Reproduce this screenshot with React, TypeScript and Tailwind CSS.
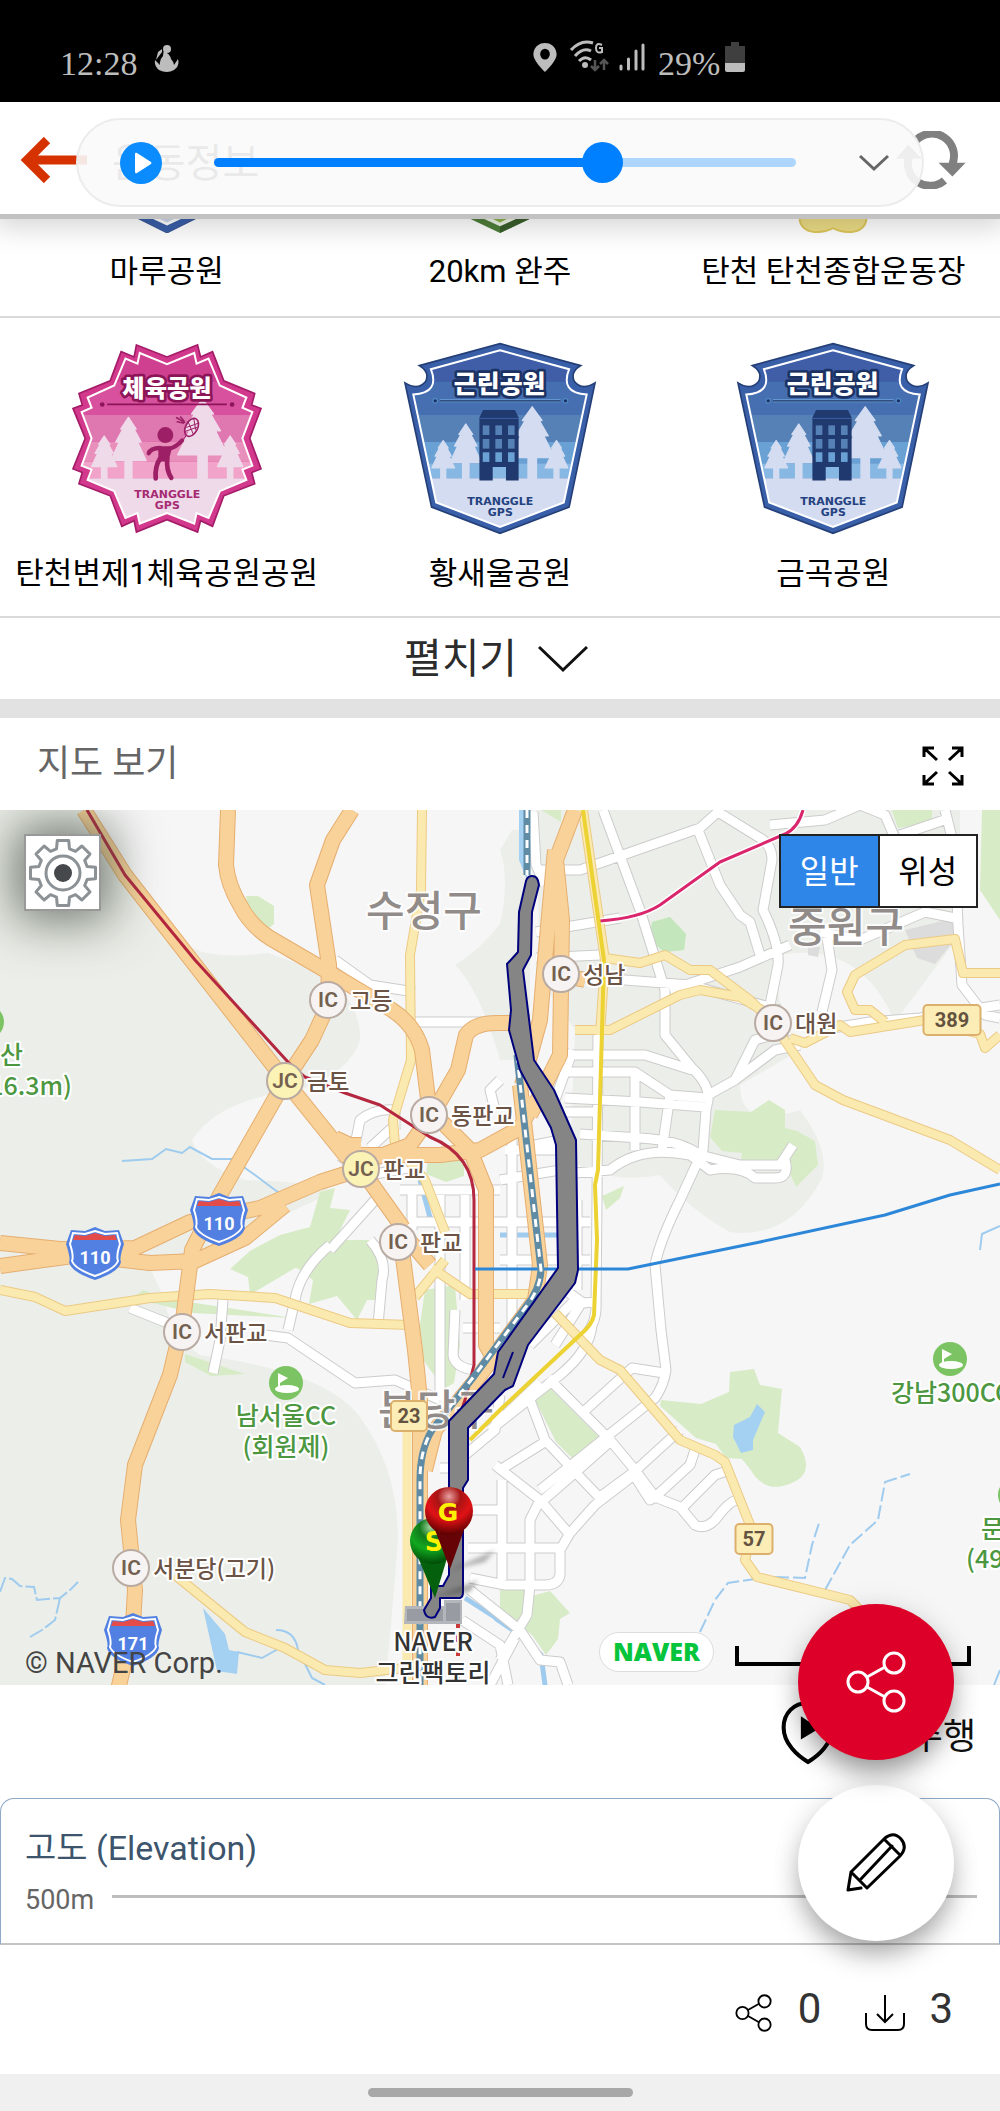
import React from "react";

const SANS = "font-['Roboto','Noto_Sans_CJK_KR',sans-serif]";

/* ---------- status bar ---------- */

function StatusBar() {
  return (
    <div className="flex h-[102px] items-end bg-black px-[60px] pb-[18px] font-['Liberation_Serif',serif] text-[34px] leading-10 text-[#bdbdbd]">
      <span className="w-[76px]">12:28</span>
      <svg className="mb-3 ml-[18px] h-[28px] w-[25px]" viewBox="0 0 25 28" fill="#bdbdbd" aria-hidden="true">
        <circle cx="13" cy="5" r="4" />
        <path d="M10 7q6 3 7 8q3 3 3 6l4-6q2 7-4 11q-7 4-15 0q-5-4-4-10l5 5q-1-5 3-9q0-3 1-5zM4 8l4-3v3l-6 8z" />
      </svg>
      <div className="ml-[354px] flex items-end">
        <svg className="mb-3 h-[29px] w-[24px]" viewBox="0 0 24 30" fill="#bdbdbd" aria-hidden="true">
          <path fillRule="evenodd" d="M12 0C5 0 0 5 0 12c0 7 12 18 12 18s12-11 12-18C24 5 19 0 12 0zm0 6a5 5.500 0 1 1 0 11a5 5.500 0 1 1 0-11z" />
        </svg>
        <svg className="mb-3 ml-3 h-[32px] w-[40px]" viewBox="0 0 40 32" aria-hidden="true">
          <g fill="none" stroke="#bdbdbd" strokeWidth="3">
            <path d="M2 10Q12-1 24 3M6 16Q14 7 22 11M10 21Q16 15 22 20" />
          </g>
          <circle cx="16" cy="25" r="3" fill="#bdbdbd" />
          <path d="M33 5q-6-3-6 3q0 6 6 4v-4h-3" fill="none" stroke="#bdbdbd" strokeWidth="2" />
          <path d="M26 20v10m-4-4l4 4l4-4M35 30V20m-4 4l4-4l4 4" fill="none" stroke="#555" strokeWidth="2.500" />
        </svg>
        <svg className="mb-3 ml-[10px] h-[30px] w-[26px]" viewBox="0 0 26 30" stroke="#bdbdbd" strokeWidth="3" strokeLinecap="round" aria-hidden="true">
          <path d="M2 24v3M9.500 17v10M17 9v18M24 3v24" />
        </svg>
        <span className="ml-[13px] w-[67px]">29%</span>
        <svg className="mb-3 h-[30px] w-[20px]" viewBox="0 0 20 30" aria-hidden="true">
          <path d="M6 0h8v4h6v18H0V4h6z" fill="#3f3f3f" />
          <path d="M0 21h20v7q0 2-2 2H2q-2 0-2-2z" fill="#bdbdbd" />
        </svg>
      </div>
    </div>
  );
}

/* ---------- header with the floating player ---------- */

function Header() {
  return (
    <header className="relative z-10 flex h-[112px] items-center justify-between bg-white pl-[20px] pr-[33px] pt-[4px] shadow-[0_5px_0_#c2c2c2,0_8px_26px_6px_rgba(0,0,0,0.16)]">
      <div className="flex items-center">
        <button type="button" aria-label="뒤로">
          <svg className="h-[46px] w-[70px]" viewBox="0 0 70 46" aria-hidden="true">
            <path d="M27 3L7 23l20 20M7 23h60" fill="none" stroke="#d63200" strokeWidth="9" />
          </svg>
        </button>
        <h1 className="ml-[22px] mt-[8px] text-[40px] leading-[48px] text-[#555]">운동정보</h1>
      </div>
      <button type="button" aria-label="새로고침">
        <svg className="h-[58px] w-[74px]" viewBox="1120 300 220 176" aria-hidden="true">
          <g fill="none" stroke="#808080" strokeWidth="24">
            <path d="M1188 328A67 67 0 0 1 1298 400" />
            <path d="M1274 450A67 67 0 0 1 1166 380" />
          </g>
          <path d="M1256 396h82l-40 42zM1126 384h80l-42-42z" fill="#808080" />
        </svg>
      </button>

      <div className="absolute inset-x-[76px] top-[16px] flex h-[89px] items-center rounded-full border-2 border-[#ececec] bg-[#fafafa]/90 pl-[42px] pr-[32px]">
        <button type="button" aria-label="재생" className="flex size-[42px] shrink-0 items-center justify-center rounded-full bg-[#0a8cff]">
          <svg className="ml-1 h-[22px] w-[18px]" viewBox="0 0 18 22" aria-hidden="true">
            <path d="M1 2v18q0 2 2 1l14-9q1-1 0-2L3 1Q1 0 1 2z" fill="#fff" />
          </svg>
        </button>
        <input
          type="range"
          aria-label="재생 위치"
          min={0}
          max={100}
          defaultValue={68}
          className="ml-[52px] mr-[62px] h-[42px] min-w-0 grow appearance-none bg-transparent [&::-webkit-slider-runnable-track]:h-[9px] [&::-webkit-slider-runnable-track]:rounded-full [&::-webkit-slider-runnable-track]:bg-[linear-gradient(90deg,#0080ff_66%,#aed5fb_66%)] [&::-webkit-slider-thumb]:mt-[-16px] [&::-webkit-slider-thumb]:size-[41px] [&::-webkit-slider-thumb]:appearance-none [&::-webkit-slider-thumb]:rounded-full [&::-webkit-slider-thumb]:bg-[#0080ff]"
        />
        <button type="button" aria-label="플레이어 접기">
          <svg className="h-[18px] w-[32px]" viewBox="0 0 32 18" aria-hidden="true">
            <path d="M2 2l14 13L30 2" fill="none" stroke="#666" strokeWidth="3" />
          </svg>
        </button>
      </div>
    </header>
  );
}

/* ---------- badges ---------- */

function Tree({ x, top, base, w, fill }: { x: number; top: number; base: number; w: number; fill: string }) {
  const h = base - top;
  const d = `M${x} ${top}L${x + w * 0.22} ${top + h * 0.27}H${x + w * 0.16}L${x + w * 0.36} ${top + h * 0.57}H${x + w * 0.26}L${x + w * 0.5} ${base}H${x - w * 0.5}L${x - w * 0.26} ${top + h * 0.57}H${x - w * 0.36}L${x - w * 0.16} ${top + h * 0.27}H${x - w * 0.22}Z`;
  return (
    <g fill={fill}>
      <path d={d} stroke={fill} strokeWidth="4" strokeLinejoin="round" />
      <rect x={x - w * 0.08 - 4} y={base} width={w * 0.16 + 8} height={480 - base} />
    </g>
  );
}

function BlueBadge({ id }: { id: string }) {
  const inner = "M1003 90L1211 147Q1183 218 1264 223L1195 548L1003 622L811 548L742 223Q823 218 795 147Z";
  return (
    <svg className="h-[196px] w-[202px]" viewBox="700 62 606 590" role="img" aria-label="근린공원 배지">
      <clipPath id={id}>
        <path d={inner} />
      </clipPath>
      <path d="M1003 70L1246 136Q1213 156 1227 184Q1250 212 1289 188L1211 562L1003 641L797 562L717 188Q756 212 779 184Q793 156 760 136Z" fill="#3a5fa9" stroke="#243f77" strokeWidth="5" />
      <g clipPath={`url(#${id})`}>
        <path d="M700 60h606v125H700z" fill="#3f5ea7" />
        <path d="M700 185h606v100H700z" fill="#456fb0" />
        <path d="M700 285h606v80H700z" fill="#5581b6" />
        <path d="M700 365h606v65H700z" fill="#69a1d4" />
        <path d="M700 430h606v45H700z" fill="#86b8e3" />
        <path d="M700 475h606v180H700z" fill="#d3dcf0" />
        <Tree x={832} top={362} base={444} w={68} fill="#d3dcf0" />
        <Tree x={900} top={312} base={428} w={94} fill="#d3dcf0" />
        <Tree x={1100} top={260} base={413} w={134} fill="#d3dcf0" />
        <Tree x={1173} top={362} base={444} w={68} fill="#d3dcf0" />
      </g>
      <path d={inner} fill="none" stroke="#fff" strokeWidth="6" />
      <path d="M941 292l11-22h96l11 22v190h-38v-41h-40v41h-40z" fill="#20396f" />
      <path d="M941 295h118" stroke="#3f5ea7" strokeWidth="3" />
      <g fill="#5581b6">
        {[951, 989, 1027].map((x) => (
          <React.Fragment key={x}>
            <rect x={x} y={316} width="20" height="29" />
            <rect x={x} y={357} width="20" height="29" />
            <rect x={x} y={397} width="20" height="29" fill="#69a1d4" />
          </React.Fragment>
        ))}
      </g>
      <path d="M822 242h363" stroke="#6fa5db" strokeWidth="9" />
      <path d="M822 242h363" stroke="#1b3263" strokeWidth="4" />
      <circle cx="808" cy="242" r="7" fill="#1b3263" stroke="#4f86c2" strokeWidth="4" />
      <circle cx="1200" cy="242" r="7" fill="#1b3263" stroke="#4f86c2" strokeWidth="4" />
      <text x="1002" y="220" textAnchor="middle" className="font-['Noto_Sans_CJK_KR',sans-serif] text-[75px] font-black" fill="#fff" stroke="#1b3263" strokeWidth="16" strokeLinejoin="round" paintOrder="stroke">근린공원</text>
      <g className="font-['DejaVu_Sans',sans-serif] text-[33px] font-bold" fill="#24427f" textAnchor="middle">
        <text x="1004" y="555">TRANGGLE</text>
        <text x="1004" y="588">GPS</text>
      </g>
    </svg>
  );
}

function PinkBadge() {
  const star = "M409 74L501 110L593 74L602 110L638 94L672 182L765 220L756 255L784 265L750 355L784 447L756 458L765 492L672 528L638 620L602 603L593 637L501 600L409 637L402 603L365 620L330 528L236 492L246 458L218 447L255 355L218 265L246 255L236 220L330 182L363 94L402 110Z";
  const inner = "M419 98L501 132L583 98L590 130L626 115L660 196L740 232L728 263L758 276L728 355L758 437L728 449L740 480L660 514L626 595L590 580L583 612L501 580L419 612L412 580L376 595L342 514L262 480L274 449L244 437L274 355L244 276L274 263L262 232L342 196L376 115L412 130Z";
  return (
    <svg className="h-[196px] w-[202px]" viewBox="198 62 606 590" role="img" aria-label="체육공원 배지">
      <clipPath id="pinkInner">
        <path d={inner} />
      </clipPath>
      <path d={star} fill="#d2398d" stroke="#a41c68" strokeWidth="5" />
      <g clipPath="url(#pinkInner)">
        <path d="M198 60h606v125H198z" fill="#cf4090" />
        <path d="M198 185h606v100H198z" fill="#d8519f" />
        <path d="M198 285h606v80H198z" fill="#df77b0" />
        <path d="M198 365h606v60H198z" fill="#e98fbb" />
        <path d="M198 425h606v50H198z" fill="#f2a3c9" />
        <path d="M198 475h606v180H198z" fill="#efdaea" />
        <Tree x={312} top={348} base={440} w={76} fill="#efdaea" />
        <Tree x={385} top={292} base={422} w={106} fill="#efdaea" />
        <Tree x={608} top={236} base={405} w={150} fill="#efdaea" />
        <Tree x={691} top={348} base={440} w={76} fill="#efdaea" />
      </g>
      <path d={inner} fill="none" stroke="#fff" strokeWidth="6" />
      <g fill="none" stroke="#9d1f66" strokeLinecap="round" strokeLinejoin="round">
        <circle cx="496" cy="345" r="24" fill="#9d1f66" stroke="none" />
        <path d="M482 386L482 418L500 418L508 386Z" fill="#9d1f66" strokeWidth="14" />
        <path d="M480 384Q452 384 446 400M508 386Q528 382 546 362" strokeWidth="13" />
        <path d="M480 416Q464 440 467 476M502 416Q498 450 514 474" strokeWidth="14" />
        <ellipse cx="575" cy="322" rx="18" ry="29" transform="rotate(28 575 322)" strokeWidth="5" />
        <path d="M546 362l14-16M564 304l16 38M582 298l5 30M560 322l34-12M556 334l34-12" strokeWidth="3" />
        <path d="M554 307l-24-14m22 10l-10-12m8 18l-18-4" strokeWidth="5" />
      </g>
      <path d="M321 253h360" stroke="#8c1558" strokeWidth="5" />
      <circle cx="306" cy="253" r="7" fill="#8c1558" />
      <circle cx="697" cy="253" r="7" fill="#8c1558" />
      <text x="501" y="231" textAnchor="middle" className="font-['Noto_Sans_CJK_KR',sans-serif] text-[73px] font-black" fill="#fff" stroke="#8c1558" strokeWidth="16" strokeLinejoin="round" paintOrder="stroke">체육공원</text>
      <g className="font-['DejaVu_Sans',sans-serif] text-[33px] font-bold" fill="#a62a72" textAnchor="middle">
        <text x="502" y="534">TRANGGLE</text>
        <text x="502" y="567">GPS</text>
      </g>
    </svg>
  );
}

function BadgeLabel({ children }: { children: React.ReactNode }) {
  return <span className="whitespace-nowrap text-[31px] leading-10 text-black">{children}</span>;
}

function Badges() {
  return (
    <section>
      <div className="grid h-[104px] grid-cols-3 border-b-2 border-[#dadada]">
        <div className="flex flex-col items-center">
          <svg className="h-[19px] w-[78px]" viewBox="0 0 80 20" aria-hidden="true">
            <path d="M0 0h80L40 20z" fill="#3a5fa9" stroke="#2c4a8a" />
            <path d="M14 0h52L40 12z" fill="#fff" />
            <path d="M22 0h36L40 9z" fill="#cfd8ee" />
          </svg>
          <div className="mt-[19px]"><BadgeLabel>마루공원</BadgeLabel></div>
        </div>
        <div className="flex flex-col items-center">
          <svg className="h-[19px] w-[84px]" viewBox="0 0 84 20" aria-hidden="true">
            <path d="M0 0h84L42 20z" fill="#4f7f3a" />
            <path d="M84 0L42 20V0z" fill="#3a5f2c" />
            <path d="M14 0h56L42 13z" fill="#eef3e6" />
            <path d="M24 0h36L42 9z" fill="#8cb24a" />
          </svg>
          <div className="mt-[19px]"><BadgeLabel>20km 완주</BadgeLabel></div>
        </div>
        <div className="flex flex-col items-center">
          <svg className="h-[19px] w-[72px]" viewBox="0 0 72 20" aria-hidden="true">
            <path d="M1 0h70v7Q68 19 52 19Q44 19 36 15Q28 19 20 19Q4 19 1 7z" fill="#ecdc85" stroke="#dcc65a" strokeWidth="2" />
          </svg>
          <div className="mt-[19px]"><BadgeLabel>탄천 탄천종합운동장</BadgeLabel></div>
        </div>
      </div>
      <div className="grid grid-cols-3 border-b-2 border-[#dadada] pb-[22px] pt-[23px]">
        <div className="flex flex-col items-center gap-[17px]"><PinkBadge /><BadgeLabel>탄천변제1체육공원공원</BadgeLabel></div>
        <div className="flex flex-col items-center gap-[17px]"><BlueBadge id="blueInnerA" /><BadgeLabel>황새울공원</BadgeLabel></div>
        <div className="flex flex-col items-center gap-[17px]"><BlueBadge id="blueInnerB" /><BadgeLabel>금곡공원</BadgeLabel></div>
      </div>
      <button type="button" className="flex h-[81px] w-full items-center justify-center gap-[21px] pr-[8px] text-[41px] leading-[48px] text-[#2c2c2c]">
        펼치기
        <svg className="h-[28px] w-[50px]" viewBox="0 0 50 28" aria-hidden="true">
          <path d="M1 2l24 23L49 2" fill="none" stroke="#111" strokeWidth="3" />
        </svg>
      </button>
      <div className="h-[19px] bg-[#e2e2e2]" />
    </section>
  );
}

/* ---------- map ---------- */

const PARKS = [
  "M246 896l12 0l16 10v18l-10 8l-14-14z",
  "M428 1160l-2 14l20 8l18-6v-16z",
  "M320 1192l15-4l-5 20l20 2l-20 40l-30 15l-50 30l-2-18l-18-8l20-18l30-16l30-8z",
  "M315 1240h60l8 30l-6 30l-10 0l-10 20l-20-24l-28 8l4-24l-16-12l-18-2z",
  "M425 1290l30-5l5 60l-6 38l-10 6l-20-28l-5-30z",
  "M185 1354l60 20l-34 2l-26-14z",
  "M652 922l18-5l16 17l-2 16l-20 2l-14-12z",
  "M715 1110l36 2l18-12l16 10v18l12 3l18 10l3 24l-22 22l-10-22l-46 4l2-16l-20-2l-12-14z",
  "M602 1196l22-10l-4 12l-14 12z",
  "M541 810h20v12z",
  "M892 810h40v12l-34 6z",
  "M982 810h18v110l-20-30z",
  "M534 1398l14-12l34 34l22 22l-26 22l-22-22z",
  "M661 1400l40 4l28-12l1-20l24-3l6 16l22 4l-4 44l22 14q14 24-4 34q-30 16-46-12l-8-10l-16-1l-10-14l-20-6l-36-32z",
  "M500 1590l18-4l14 10l18-5l20 22l-10 6l-2 20l-12 16l-14-20l-32-24z",
  "M133 1298l60 15l100 5l-130-20l-20-8z",
];

const HILLS = [
  "M0 810H88Q150 900 190 947Q215 960 268 953L330 975Q362 1010 360 1040Q352 1070 300 1090Q220 1098 192 1140Q200 1165 245 1180Q320 1182 335 1192Q290 1210 250 1235L150 1268L165 1300Q170 1335 200 1355Q330 1372 362 1420Q398 1470 398 1540Q392 1620 385 1685H0Z",
  "M455 965Q480 950 500 924Q510 880 500 850L512 830H530V1060H500Q480 990 455 965Z",
  "M536 810H960V935L900 1015L895 1022Q860 940 780 955Q770 1000 800 1050L740 1085Q740 1130 800 1110Q830 1150 822 1178Q790 1240 730 1232Q690 1210 660 1175Q610 1185 570 1160L575 1030L540 980Z",
];

const WHITE_ROADS = [
  "M603 810L640 910L665 990L665 1035L692 1068Q710 1085 708 1100L706 1110L703 1150L680 1200Q660 1240 655 1265L661 1330L666 1370Q664 1385 655 1398L540 1490",
  "M536 870H580L700 828L718 812L760 838Q772 845 772 860L763 910Q780 945 778 965L770 1005",
  "M698 830L720 885L740 915L750 922L760 955",
  "M533 812L536 865L545 885M536 932L620 918",
  "M536 958L600 955M670 990L740 967L790 945M560 975L690 985L780 1010",
  "M825 925L832 970L822 1012M820 932L860 940L925 912L955 918",
  "M945 810L955 850L958 925L962 985L985 1015L1000 1018M770 825L825 820L860 805L885 815L900 850M900 835L950 818",
  "M820 1030L870 1022L920 1018L1000 1005",
  "M570 1055H645L692 1070M560 1072H635L670 1095L708 1098",
  "M565 1098L640 1102L705 1107M565 1112H595M580 1134L640 1138Q680 1140 700 1155L740 1165H780L793 1145M575 1173L610 1170Q640 1145 690 1155L710 1170Q740 1165 755 1178H775Q790 1178 785 1160",
  "M635 1075V1150M670 1095L662 1150M573 1050L555 1100M535 1145L560 1140",
  "M708 1095L735 1080L755 1040L790 1030M735 1080L775 1050L800 1045",
  "M598 1030L597 1200L596 1310Q594 1330 580 1340",
  "M500 1180L560 1170M512 1130V1330M500 1222H590M500 1260H590M577 1200V1290M505 1150H560",
  "M340 1156L370 1175L408 1168M375 1200L330 1250M400 1190H500M412 1190V1230M440 1195V1400M465 1195V1300M412 1222H500M440 1190H500",
  "M330 1245Q300 1270 295 1300L288 1330M370 1240Q388 1260 382 1280L378 1325",
  "M130 1308L165 1322L185 1330M223 1300L220 1340L213 1373M265 1335L288 1338L355 1383L395 1380L440 1400",
  "M335 960L370 985L415 992M415 1022H500M355 1145L360 1120Q375 1108 395 1110L395 1130M500 1080L490 1090L495 1110M370 1148L395 1125",
  "M455 1310L453 1355Q455 1368 475 1370M463 1328H500",
  "M490 1430L560 1375Q590 1350 592 1325M540 1382L500 1420M548 1378L610 1440L635 1470L655 1497L680 1507L695 1525Q705 1530 715 1520Q730 1500 738 1500",
  "M530 1400L545 1440L578 1475L600 1498M500 1470L548 1440M580 1415L632 1368L664 1373M555 1345L580 1305M565 1290L583 1303L595 1302M575 1300L530 1345",
  "M495 1465L540 1500L570 1535M540 1503L578 1470L612 1440M600 1497L634 1472L680 1430M570 1533L595 1505L634 1475L650 1500L655 1497L690 1465L695 1450M680 1510L715 1475L730 1470",
  "M540 1500L530 1520V1585L527 1615L500 1660M570 1533L560 1550V1575Q558 1585 545 1585H505L470 1578M500 1548H560M502 1480V1580M465 1510H500M468 1548H500M440 1468H460",
  "M470 1590L520 1630L540 1660L560 1662L568 1685M515 1638L490 1685M462 1620L500 1645L508 1685",
  "M465 1455L495 1430L500 1395",
];

const YELLOW_ROADS = [
  "M422 810L421 890L410 955L411 1060L393 1120L395 1145L425 1180L445 1232",
  "M0 1290L35 1297L65 1311L150 1298L210 1294L275 1298L350 1323L410 1325",
  "M415 1297L445 1260M432 1268L470 1294H530L540 1305",
  "M175 1575L245 1632L285 1648L325 1670L360 1673L405 1668",
  "M583 810L605 960L600 1035",
  "M605 958L640 963L665 955L690 970H710L750 1000L773 1023L815 1085L843 1100L950 1140L1000 1170",
  "M575 1030H610L680 995L700 990L740 997L770 1015",
  "M790 1038L805 1043L840 1025L850 1032L925 1020L980 1034L985 1048L1000 1035",
  "M885 1022L870 1010H855L847 992L855 975L905 945L955 939L963 973H1000",
  "M555 1313L600 1360L620 1370L680 1440L715 1455L725 1462L752 1530L745 1560L757 1577L850 1600L865 1615",
];

const ORANGE_ROADS = [
  "M84 810L125 875L283 1078L345 1155L361 1169L403 1228",
  "M285 1081L220 1195L192 1250L183 1320L170 1375L135 1465L128 1520L135 1590L133 1625L118 1690",
  "M228 810L226 865Q228 885 240 905Q250 925 270 938L330 973L392 1010Q415 1025 422 1050L430 1115",
  "M352 810L333 840L317 885L329 965L328 1005L312 1040L285 1081",
  "M0 1243L60 1249L135 1248L190 1222L260 1208L320 1182L361 1169",
  "M0 1266L80 1255L150 1263L195 1261L245 1238L285 1205",
  "M361 1163L410 1145L435 1110L458 1070L466 1035Q475 1022 500 1023H530",
  "M335 1138L350 1145H361M361 1155H440L480 1150L520 1128L535 1100",
  "M440 1120L470 1150L486 1190V1345L497 1365",
  "M555 850L545 960L540 1020L522 1085",
  "M575 810L556 860L562 920L560 1055L530 1115",
  "M561 975L585 980",
  "M400 1230L430 1265M402 1250L415 1350L420 1400V1690",
  "M520 1085L540 1265L535 1300L480 1375L435 1430L425 1470",
];

const RAIL = "M527 810V875M517 1055L524 1120L541 1270Q540 1290 525 1308L475 1375L432 1430Q420 1450 420 1480V1690";
const TRACK = "M526 881L519 912L518 952L507 964L511 1010L509 1030L520 1070L551 1128L556 1145L558 1268L498 1352L494 1374L449 1421V1575L443 1586H431V1598L424 1610Q426 1620 435 1617L440 1608V1598H460Q463 1597 463 1592V1488L468 1480V1428L505 1390L513 1386L528 1345L575 1283L578 1270L576 1140L554 1090L534 1060L523 970L531 955L532 912L539 885Q538 875 531 876Q527 877 526 881Z";

const JUNCTIONS = [
  { x: 328, y: 1000, kind: "IC", name: "고등" },
  { x: 285, y: 1081, kind: "JC", name: "금토" },
  { x: 429, y: 1115, kind: "IC", name: "동판교" },
  { x: 361, y: 1169, kind: "JC", name: "판교" },
  { x: 398, y: 1242, kind: "IC", name: "판교" },
  { x: 561, y: 974, kind: "IC", name: "성남" },
  { x: 773, y: 1023, kind: "IC", name: "대원" },
  { x: 182, y: 1332, kind: "IC", name: "서판교" },
  { x: 131, y: 1568, kind: "IC", name: "서분당(고기)" },
];

const SHIELDS = [
  { x: 219, y: 1220, n: "110" },
  { x: 95, y: 1254, n: "110" },
  { x: 133, y: 1640, n: "171" },
];

const ROUTES = [
  { x: 952, y: 1020, w: 57, n: "389" },
  { x: 409, y: 1416, w: 36, n: "23" },
  { x: 754, y: 1539, w: 37, n: "57" },
];

function RoadLayer({ roads, casing, fill, width }: { roads: string[]; casing: string; fill: string; width: number }) {
  const d = roads.join("");
  return (
    <g fill="none" strokeLinejoin="round" strokeLinecap="butt">
      <path d={d} stroke={casing} strokeWidth={width + 2} />
      <path d={d} stroke={fill} strokeWidth={width} />
    </g>
  );
}

function GolfPin({ x, y }: { x: number; y: number }) {
  return (
    <g>
      <circle cx={x} cy={y} r="17" fill="#7cc463" />
      <path d={`M${x - 8} ${y + 5}V${y - 10}L${x + 2} ${y - 5}L${x - 6} ${y}V${y + 5}`} fill="#fff" />
      <ellipse cx={x + 1} cy={y + 6} rx="12" ry="4" fill="#fff" />
    </g>
  );
}

function MapDrawing() {
  return (
    <svg className="block h-auto w-full" viewBox="0 810 1000 875" role="img" aria-label="운동 경로 지도">
      <defs>
        <radialGradient id="redBall" cx="50%" cy="20%" r="80%">
          <stop offset="0" stopColor="#e8a0a0" />
          <stop offset="0.3" stopColor="#a81414" />
          <stop offset="0.6" stopColor="#e01216" />
          <stop offset="1" stopColor="#5a0000" />
        </radialGradient>
        <radialGradient id="greenBall" cx="45%" cy="20%" r="80%">
          <stop offset="0" stopColor="#a5d8a5" />
          <stop offset="0.3" stopColor="#127a1c" />
          <stop offset="0.6" stopColor="#12a820" />
          <stop offset="1" stopColor="#004a08" />
        </radialGradient>
        <filter id="soft"><feGaussianBlur stdDeviation="2" /></filter>
      </defs>
      <path d="M0 810H1000V1685H0Z" fill="#f6f6f6" />
      <path d={HILLS.join("")} fill="#ecefe9" />
      <path d={PARKS.join("")} fill="#d7ecc6" />
      <path d="M652 922l18-5l16 17l-2 16l-20 2l-14-12z" fill="#c3e6bc" />
      <path d="M905 930l50-12l8 12l-28 34l-18-6zM808 945l12 2l-2 10l-10-2z" fill="#dcdcdc" />
      <g fill="#a4d0f2">
        <path d="M203 1608l22 26l4 16l10 2l-2 22l-20-3z" />
        <path d="M757 1404l8 8l-12 28v10l-12 3l-8-16l1-12l16-8z" />
        <path d="M519 810h8v70l-8-20z" />
      </g>
      <g fill="none" stroke="#9fcbee" strokeWidth="2">
        <path d="M122 1161L152 1159L166 1149L182 1153L190 1147L212 1159H232L255 1175L275 1190L290 1200" />
        <path d="M0 1592L5 1578L12 1579L20 1586L34 1587L37 1600L60 1598L70 1590L78 1582M60 1598L55 1620L42 1630L30 1637" strokeDasharray="16 3" />
        <path d="M237 1652L262 1658L285 1645M276 1630Q295 1630 298 1650L312 1678L325 1685" />
        <path d="M700 1632L715 1600L728 1583L755 1579M775 1577L805 1578L812 1545L820 1520M825 1590L850 1545L878 1520L885 1482L910 1474" strokeDasharray="14 4" />
        <path d="M980 1250l2-16l18-8M1000 1670l-6 15" />
        <path d="M495 1618L520 1635M420 1180L432 1225M560 1235H500" strokeWidth="5" />
        <path d="M465 1598L518 1632L541 1655L545 1685" strokeWidth="5" />
      </g>
      <RoadLayer roads={WHITE_ROADS} casing="#cccccc" fill="#ffffff" width={9} />
      <RoadLayer roads={YELLOW_ROADS} casing="#ecca85" fill="#faeaaf" width={8} />
      <path d="M407 1400V1685" stroke="#faeaaf" strokeWidth="9" />
      <RoadLayer roads={ORANGE_ROADS} casing="#e6ae70" fill="#f8d298" width={14} />

      <g fill="none" strokeLinejoin="round">
        <path d="M87 810L125 875L195 960L288 1062L305 1077L345 1093L380 1105L430 1137Q474 1155 474 1200V1365L465 1400L455 1430" stroke="#b4273f" strokeWidth="3" />
        <path d="M803 810Q798 828 785 834L720 862L660 905Q640 918 600 921" stroke="#fff" strokeWidth="6" />
        <path d="M803 810Q798 828 785 834L720 862L660 905Q640 918 600 921" stroke="#d9266d" strokeWidth="3" />
        <path d="M583 810L604 960L598 1170L595 1185L597 1240L594 1315Q592 1325 580 1335L500 1410L470 1440" stroke="#ecd232" strokeWidth="4" />
        <path d="M475 1269H628L760 1242L885 1215L950 1195L1000 1184" stroke="#2d87d8" strokeWidth="3" />
        <path d="M458 1620V1685" stroke="#c83a3a" strokeWidth="4" strokeDasharray="8 6" />
        <path d={RAIL} stroke="#5f8ba5" strokeWidth="7" />
        <path d={RAIL} stroke="#fff" strokeWidth="3" strokeDasharray="8 7" />
      </g>

      <g className="font-['Noto_Sans_CJK_KR',sans-serif] text-[42px] font-medium" fill="#918b89" stroke="#fff" strokeWidth="4" strokeLinejoin="round" paintOrder="stroke" strokeOpacity="0.8">
        <text x="366" y="926">수정구</text>
        <text x="788" y="942">중원구</text>
        <text x="378" y="1425">분당구</text>
      </g>

      {ROUTES.map((r) => (
        <g key={r.n}>
          <rect x={r.x - r.w / 2} y={r.y - 15} width={r.w} height="30" rx="4" fill="#fbedb5" stroke="#dcb06c" strokeWidth="2" />
          <text x={r.x} y={r.y + 7} textAnchor="middle" className="font-['Roboto',sans-serif] text-[20px] font-bold" fill="#63523f">{r.n}</text>
        </g>
      ))}

      {SHIELDS.map((s) => (
        <g key={`${s.x}`} transform={`translate(${s.x} ${s.y})`}>
          <path d="M0-27L10-23L24-24L29-10Q24 5 26 8Q24 18 0 26Q-24 18-26 8Q-24 5-29-10L-24-24L-10-23Z" fill="#5180e2" />
          <path d="M0-23L10-20L22-21L25-10Q21 2 23 7Q20 15 0 22Q-20 15-23 7Q-21 2-25-10L-22-21L-10-20Z" fill="#5180e2" stroke="#fff" strokeWidth="2" />
          <path d="M-22-14L-20-19L-10-18L0-21L10-18L20-19L22-14Z" fill="#e44c49" />
          <text x="0" y="10" textAnchor="middle" className="font-['Roboto',sans-serif] text-[18px] font-bold" fill="#fff">{s.n}</text>
        </g>
      ))}

      {JUNCTIONS.map((j) => (
        <g key={`${j.x}-${j.y}`}>
          <circle cx={j.x} cy={j.y} r="18" fill={j.kind === "JC" ? "#fbf2b6" : "#f6f3f2"} stroke="#b9aaa2" strokeWidth="2" />
          <text x={j.x} y={j.y + 7} textAnchor="middle" className="font-['Roboto',sans-serif] text-[21px] font-semibold" fill="#74604f">{j.kind}</text>
          <text x={j.x + 22} y={j.y + 9} className="font-['Noto_Sans_CJK_KR',sans-serif] text-[23px] font-medium" fill="#6b5446" stroke="#fff" strokeWidth="4" strokeLinejoin="round" paintOrder="stroke">{j.name}</text>
        </g>
      ))}

      <circle cx="-13" cy="1022" r="17" fill="#7cc463" />
      <circle cx="1015" cy="1495" r="17" fill="#7cc463" />
      <GolfPin x={286} y={1383} />
      <GolfPin x={950} y={1359} />
      <g className="font-['Noto_Sans_CJK_KR',sans-serif] text-[25px] font-medium" fill="#4c973f" stroke="#fff" strokeWidth="4" strokeLinejoin="round" paintOrder="stroke">
        <text x="0" y="1064">산</text>
        <text x="72" y="1095" textAnchor="end">16.3m)</text>
        <text x="286" y="1425" textAnchor="middle">남서울CC</text>
        <text x="286" y="1456" textAnchor="middle">(회원제)</text>
        <text x="891" y="1402">강남300CC</text>
        <text x="981" y="1538">문</text>
        <text x="966" y="1568">(496m)</text>
      </g>

      <path d="M405 1606H444V1600H462V1624H404Z" fill="#b3b7bc" />
      <path d="M407 1609h36v12h-36zM446 1603h14v18h-14z" fill="#989ca2" />
      <path d={TRACK} fill="#858585" stroke="#00007d" strokeWidth="2" strokeLinejoin="round" />
      <path d="M513 1352L503 1378" stroke="#00007d" strokeWidth="2" />
      <g className="font-['Noto_Sans_CJK_KR',sans-serif] text-[25px] font-medium" fill="#333" stroke="#fff" strokeWidth="4" strokeLinejoin="round" paintOrder="stroke" textAnchor="middle">
        <text x="433" y="1651">NAVER</text>
        <text x="433" y="1682">그린팩토리</text>
      </g>

      <path d="M450 1570L495 1550L485 1562ZM436 1596L478 1580L470 1592Z" fill="#333" opacity="0.35" filter="url(#soft)" />
      <path d="M417 1555L435 1598L448 1555Z" fill="#04600c" />
      <circle cx="433" cy="1541" r="23" fill="url(#greenBall)" />
      <text x="434" y="1551" textAnchor="middle" className="font-['DejaVu_Sans',sans-serif] text-[26px] font-bold" fill="#fff200">S</text>
      <path d="M435 1530L450 1569L464 1530Z" fill="#650306" />
      <circle cx="449" cy="1511" r="24" fill="url(#redBall)" />
      <text x="448" y="1521" textAnchor="middle" className="font-['DejaVu_Sans',sans-serif] text-[25px] font-bold" fill="#fff200">G</text>
    </svg>
  );
}

/* Outline of an eight-toothed gear centred on (35, 35). */
const GEAR = Array.from({ length: 8 }, (_, i) => {
  const at = (deg: number, r: number) => {
    const a = ((i * 45 + deg) * Math.PI) / 180;
    return `${(35 + r * Math.cos(a)).toFixed(1)} ${(35 + r * Math.sin(a)).toFixed(1)}`;
  };
  return `${i ? "L" : "M"}${at(-15, 25)}L${at(-10, 33)}L${at(10, 33)}L${at(15, 25)}`;
}).join("") + "Z";

function MapSection() {
  return (
    <section>
      <div className="flex h-[92px] items-center justify-between pl-[37px] pr-[36px]">
        <h2 className="text-[36px] leading-[44px] text-[#666]">지도 보기</h2>
        <button type="button" aria-label="전체 화면">
          <svg className="mt-1 h-[40px] w-[42px]" viewBox="0 0 42 40" fill="none" stroke="#000" strokeWidth="3" aria-hidden="true">
            <path d="M2 11V2H12M2 2L15 14M30 2H40V11M40 2L27 14M2 29V38H12M2 38L15 26M30 38H40V29M40 38L27 26" />
          </svg>
        </button>
      </div>
      <div className="relative overflow-hidden">
        <MapDrawing />
        <button type="button" aria-label="지도 설정" className="absolute left-[24px] top-[24px] flex size-[77px] items-center justify-center border-2 border-[#999] bg-white shadow-[0_0_50px_10px_rgba(70,80,70,0.75)]">
          <svg className="size-[70px]" viewBox="0 0 70 70" aria-hidden="true">
            <path d={GEAR} fill="#fff" stroke="#8b9195" strokeWidth="3" strokeLinejoin="round" />
            <circle cx="35" cy="35" r="17" fill="none" stroke="#8b9195" strokeWidth="3" />
            <circle cx="35" cy="35" r="9" fill="#45494b" />
          </svg>
        </button>
        <div className="absolute right-[22px] top-[24px] flex h-[74px] w-[199px] border-2 border-[#222] text-[32px]">
          <button type="button" aria-pressed="true" className="grow basis-0 border-r-2 border-[#222] bg-[#2e86e8] pt-[2px] text-white">일반</button>
          <button type="button" aria-pressed="false" className="grow basis-0 bg-white pt-[2px] text-black">위성</button>
        </div>
        <p className="absolute bottom-[4px] left-[25px] text-[29px] leading-9 text-[#444]">© NAVER Corp.</p>
        <a href="#naver" className="absolute bottom-[13px] left-[599px] flex h-[40px] w-[115px] items-center justify-center rounded-full border border-[#ddd] bg-white font-['Open_Sans',sans-serif] text-[25px] font-extrabold text-[#06c43c]">NAVER</a>
        <div className="absolute bottom-[19px] right-[29px] h-[20px] w-[236px] border-4 border-t-0 border-black" />
      </div>
    </section>
  );
}

/* ---------- lower part ---------- */

function ShareGlyph({ className, w }: { className: string; w: number }) {
  return (
    <svg className={className} viewBox="0 0 60 62" fill="none" stroke="currentColor" strokeWidth={w} aria-hidden="true">
      <circle cx="12" cy="31" r="10" />
      <circle cx="48" cy="12" r="10" />
      <circle cx="48" cy="50" r="10" />
      <path d="M21 26L39 16M21 36L39 46" />
    </svg>
  );
}

function LowerSection() {
  return (
    <div className="relative">
      <div className="flex h-[113px] items-start justify-end gap-[9px] pr-[24px] pt-[16px]">
        <svg className="h-[64px] w-[54px]" viewBox="0 0 52 63" aria-hidden="true">
          <path d="M26 2C12 2 2 12 2 26C2 42 16 54 26 60C36 54 50 42 50 26C50 12 40 2 26 2Z" fill="none" stroke="#000" strokeWidth="4" />
          <path d="M19 15v23l18-11z" fill="#000" />
        </svg>
        <button type="button" className="mt-[13px] text-[36px] leading-[46px] text-[#111]">모의주행</button>
      </div>

      <section className="h-[147px] rounded-t-[14px] border border-b-2 border-[#8fa9c8] border-b-[#c4c4c4] pl-[24px] pr-[22px] pt-[27px]">
        <h2 className="text-[34px] leading-[44px] text-[#3c546c]">고도 (Elevation)</h2>
        <div className="mt-[12px] flex items-center text-[27px] leading-[36px] text-[#666]">
          <span className="w-[87px]">500m</span>
          <div className="mb-[8px] h-[3px] grow bg-[#bdbdbd]" />
        </div>
      </section>

      <footer className="flex h-[129px] items-center justify-end pb-[1px] pr-[47px] text-[42px] leading-none text-[#333]">
        <button type="button" aria-label="공유 0" className="flex items-center">
          <ShareGlyph className="mt-2 h-[38px] w-[37px] text-black" w={3} />
          <span className="ml-[26px]">0</span>
        </button>
        <button type="button" aria-label="저장 3" className="ml-[44px] flex items-center">
          <svg className="mt-2 h-[36px] w-[40px]" viewBox="0 0 40 36" fill="none" stroke="#000" strokeWidth="2" aria-hidden="true">
            <path d="M1 18v11q0 6 6 6h26q6 0 6-6V18M20 0v27M12 19l8 8l8-8" />
          </svg>
          <span className="ml-[24px]">3</span>
        </button>
      </footer>

      <button type="button" aria-label="편집" className="absolute right-[46px] top-[100px] flex size-[156px] items-center justify-center rounded-full bg-white shadow-[0_16px_28px_-4px_rgba(0,0,0,0.35),0_0_30px_rgba(0,0,0,0.08)]">
        <svg className="size-[60px]" viewBox="0 0 60 60" fill="none" stroke="#000" strokeWidth="3" strokeLinejoin="round" strokeLinecap="round" aria-hidden="true">
          <path d="M5 39L39 5Q48-2 55 6Q62 14 54 23L21 55ZM38 6L54 22M14 47L46 13M5 39L2 57L15 55" />
        </svg>
      </button>
      <button type="button" aria-label="경로 공유" className="absolute right-[46px] top-[-81px] flex size-[156px] items-center justify-center rounded-full bg-[#dd0028] text-white shadow-[0_16px_28px_-4px_rgba(0,0,0,0.4),0_0_30px_rgba(0,0,0,0.08)]">
        <ShareGlyph className="h-[62px] w-[60px]" w={3} />
      </button>
    </div>
  );
}

export default function App() {
  return (
    <div className={`w-full overflow-hidden bg-white ${SANS}`}>
      <StatusBar />
      <Header />
      <main>
        <Badges />
        <MapSection />
        <LowerSection />
      </main>
      <div className="flex h-[44px] items-center justify-center bg-[#f0f0f0]">
        <div className="mt-[-8px] h-[9px] w-[265px] rounded-full bg-[#a8a8a8]" />
      </div>
    </div>
  );
}
